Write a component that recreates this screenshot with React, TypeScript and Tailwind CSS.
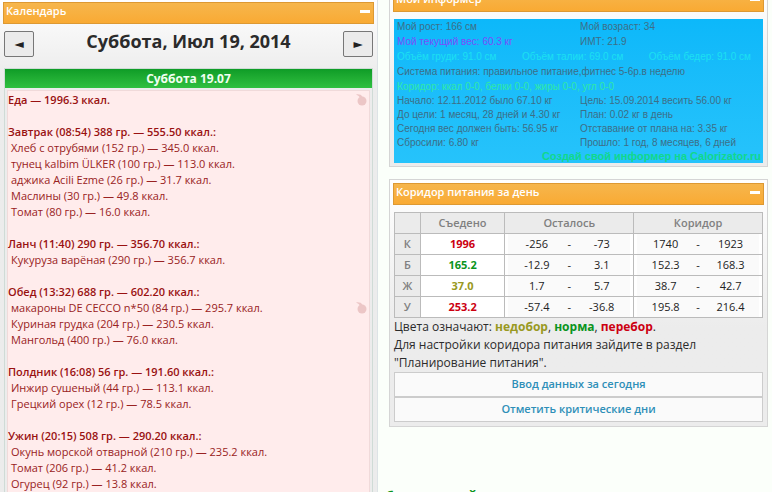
import { clsx } from "clsx";
import { type ReactNode } from "react";

type Meal = {
  title: string;
  items: string[];
};

const meals: Meal[] = [
  {
    title: "Завтрак (08:54) 388 гр. — 555.50 ккал.:",
    items: [
      "Хлеб с отрубями (152 гр.) — 345.0 ккал.",
      "тунец kalbim ÜLKER (100 гр.) — 113.0 ккал.",
      "аджика Acili Ezme (26 гр.) — 31.7 ккал.",
      "Маслины (30 гр.) — 49.8 ккал.",
      "Томат (80 гр.) — 16.0 ккал.",
    ],
  },
  {
    title: "Ланч (11:40) 290 гр. — 356.70 ккал.:",
    items: ["Кукуруза варёная (290 гр.) — 356.7 ккал."],
  },
  {
    title: "Обед (13:32) 688 гр. — 602.20 ккал.:",
    items: [
      "макароны DE CECCO n*50 (84 гр.) — 295.7 ккал.",
      "Куриная грудка (204 гр.) — 230.5 ккал.",
      "Мангольд (400 гр.) — 76.0 ккал.",
    ],
  },
  {
    title: "Полдник (16:08) 56 гр. — 191.60 ккал.:",
    items: [
      "Инжир сушеный (44 гр.) — 113.1 ккал.",
      "Грецкий орех (12 гр.) — 78.5 ккал.",
    ],
  },
  {
    title: "Ужин (20:15) 508 гр. — 290.20 ккал.:",
    items: [
      "Окунь морской отварной (210 гр.) — 235.2 ккал.",
      "Томат (206 гр.) — 41.2 ккал.",
      "Огурец (92 гр.) — 13.8 ккал.",
    ],
  },
];

const markedItem = "макароны DE CECCO n*50 (84 гр.) — 295.7 ккал.";

const rows = [
  { key: "К", eaten: "1996", color: "text-[#cc0011]", left: ["-256", "-73"], range: ["1740", "1923"] },
  { key: "Б", eaten: "165.2", color: "text-[#0a9420]", left: ["-12.9", "3.1"], range: ["152.3", "168.3"] },
  { key: "Ж", eaten: "37.0", color: "text-[#999922]", left: ["1.7", "5.7"], range: ["38.7", "42.7"] },
  { key: "У", eaten: "253.2", color: "text-[#cc0011]", left: ["-57.4", "-36.8"], range: ["195.8", "216.4"] },
];

const Apple = () => (
  <svg viewBox="0 0 12 12" className="size-3 shrink-0 fill-[#ecc6c6]">
    <circle cx="7" cy="7" r="4.500" />
    <path d="M1 0.500C3.500 0 6.500 0.500 7.500 3L5 4C4.500 2.500 3 1.500 1 0.500Z" />
  </svg>
);

const PanelHeader = ({ children }: { children: ReactNode }) => (
  <header className="flex h-[22px] items-start justify-between border border-[#dd9933] bg-linear-to-b from-[#f6b64c] to-[#f9aa33] pr-[3px] pl-0.5 text-[11px] leading-4 font-semibold text-white">
    <h2>{children}</h2>
    <button
      type="button"
      aria-label="Свернуть"
      className="mt-[7px] h-[3px] w-2.5 bg-white"
    />
  </header>
);

const Panel = ({ children }: { children: ReactNode }) => (
  <section className="border border-[#d5d5d5] bg-linear-to-b from-white to-[#ececec] to-60% p-[3px]">
    {children}
  </section>
);

const NavButton = ({ label, children }: { label: string; children: string }) => (
  <button
    type="button"
    aria-label={label}
    className="h-[26px] w-[30px] rounded-xs border border-[#777777] bg-[#ebebeb] font-['DejaVu_Sans',sans-serif] text-xs text-[#222222]"
  >
    {children}
  </button>
);

const Calendar = () => (
  <section className="border-r border-[#dde3e6] bg-[#ececec] bg-linear-to-b from-white to-[#ececec] to-15% px-[3px] pt-0.5">
    <PanelHeader>Календарь</PanelHeader>
    <div className="mt-[7px] flex justify-between px-px">
      <NavButton label="Предыдущий день">◄</NavButton>
      <h1 className="text-lg leading-5 font-bold text-[#2b2b2b]">
        Суббота, Июл 19, 2014
      </h1>
      <NavButton label="Следующий день">►</NavButton>
    </div>
    <div className="mx-px mt-[11px] border border-[#cfdbd6]">
      <h3 className="h-[19px] bg-linear-to-b from-[#0e9c27] to-[#2fc040] text-center text-xs leading-[19px] font-bold text-[#f0fff0]">
        Суббота 19.07
      </h3>
      <div className="mx-0.5 mt-0.5 space-y-4 border border-[#f0dada] bg-[#ffecec] pt-px text-[11px] leading-4 text-[#992222]">
        <h4 className="flex items-center justify-between pr-0.5 font-semibold text-[#991111]">
          Еда — 1996.3 ккал.
          <Apple />
        </h4>
        {meals.map((meal) => (
          <div key={meal.title}>
            <h4 className="font-semibold text-[#991111]">{meal.title}</h4>
            <ul className="pr-0.5 pl-[3px]">
              {meal.items.map((item) => (
                <li key={item} className="flex items-center justify-between">
                  {item}
                  {item === markedItem && <Apple />}
                </li>
              ))}
            </ul>
          </div>
        ))}
      </div>
    </div>
  </section>
);

const Informer = () => (
  <Panel>
    <PanelHeader>Мой информер</PanelHeader>
    <div className="mx-px mt-[7px] bg-linear-to-b from-[#0cb8fa] to-[#26c3fb] pl-[3px] font-['Liberation_Sans',sans-serif] text-[10px] text-[#3d6e87]">
      <div className="grid grid-cols-2 leading-[15px]">
        <p>Мой рост: 166 см</p>
        <p>Мой возраст: 34</p>
        <p className="text-[#7b4dfa]">Мой текущий вес: 60.3 кг</p>
        <p>ИМТ: 21.9</p>
        <p className="col-span-2 flex justify-between pr-3 text-[#1ce0f2]">
          <span>Объём груди: 91.0 см</span>
          <span>Объём талии: 69.0 см</span>
          <span>Объём бедер: 91.0 см</span>
        </p>
        <p className="col-span-2">
          Система питания: правильное питание,фитнес 5-6р.в неделю
        </p>
        <p className="col-span-2 text-[#2fe8a8]">
          Коридор: ккал 0-0, белки 0-0, жиры 0-0, угл 0-0
        </p>
      </div>
      <div className="grid grid-cols-2 leading-[14px]">
        <p>Начало: 12.11.2012 было 67.10 кг</p>
        <p>Цель: 15.09.2014 весить 56.00 кг</p>
        <p>До цели: 1 месяц, 28 дней и 4.30 кг</p>
        <p>План: 0.02 кг в день</p>
        <p>Сегодня вес должен быть: 56.95 кг</p>
        <p>Отставание от плана на: 3.35 кг</p>
        <p>Сбросили: 6.80 кг</p>
        <p>Прошло: 1 год, 8 месяцев, 6 дней</p>
      </div>
      <a
        href="#"
        className="block pr-0.5 text-right text-[11px] leading-[13px] font-bold text-[#10d88c]"
      >
        Создай свой информер на Calorizator.ru
      </a>
    </div>
  </Panel>
);

const Range = ({ values }: { values: string[] }) => (
  <div className="mx-[3px] grid grid-cols-[1fr_8px_1fr] bg-[#fafafa] text-center">
    <span>{values[0]}</span>
    <span>-</span>
    <span>{values[1]}</span>
  </div>
);

const Corridor = () => (
  <Panel>
    <PanelHeader>Коридор питания за день</PanelHeader>
    <div className="mx-px mt-[7px] mb-px">
      <table className="w-full table-fixed border-collapse bg-white text-center text-[11px] leading-5 text-[#222222] [&_td]:border [&_td]:border-[#bbbbbb] [&_td]:p-0 [&_th]:border [&_th]:border-[#bbbbbb] [&_th]:bg-[#ebebeb] [&_th]:p-0 [&_th]:font-semibold [&_th]:text-[#808080]">
        <thead>
          <tr>
            <th className="w-[7%]" />
            <th className="w-[23%]">Съедено</th>
            <th className="w-[35%]">Осталось</th>
            <th className="w-[35%]">Коридор</th>
          </tr>
        </thead>
        <tbody>
          {rows.map((row) => (
            <tr key={row.key}>
              <th scope="row">{row.key}</th>
              <td className={clsx("font-bold", row.color)}>{row.eaten}</td>
              <td>
                <Range values={row.left} />
              </td>
              <td>
                <Range values={row.range} />
              </td>
            </tr>
          ))}
        </tbody>
      </table>
      <p className="text-xs leading-[18px] text-[#2b2b2b]">
        Цвета означают: <b className="text-[#999922]">недобор</b>,{" "}
        <b className="text-[#0a9420]">норма</b>,{" "}
        <b className="text-[#cc0011]">перебор</b>.
        <br />
        Для настройки коридора питания зайдите в раздел
        <br />
        "Планирование питания".
      </p>
      <div className="flex flex-col text-[11px] font-semibold text-[#2e8fb8]">
        <button type="button" className="h-[25px] border border-[#cccccc] bg-[#fafafa]">
          Ввод данных за сегодня
        </button>
        <button type="button" className="h-[25px] border border-[#cccccc] bg-[#fafafa]">
          Отметить критические дни
        </button>
      </div>
    </div>
  </Panel>
);

export default function App() {
  return (
    <div className="grid h-screen grid-cols-[1fr_1fr] overflow-hidden bg-[#fbfffa] font-['Open_Sans',sans-serif]">
      <div className="pr-2">
        <Calendar />
      </div>
      <div className="-mt-3.5 pr-1">
        <div className="flex flex-col gap-3 pl-[3px]">
          <Informer />
          <Corridor />
        </div>
        <p className="mt-[61px] text-xs leading-4 font-bold text-[#0a9420]">
          без категорий
        </p>
      </div>
    </div>
  );
}
